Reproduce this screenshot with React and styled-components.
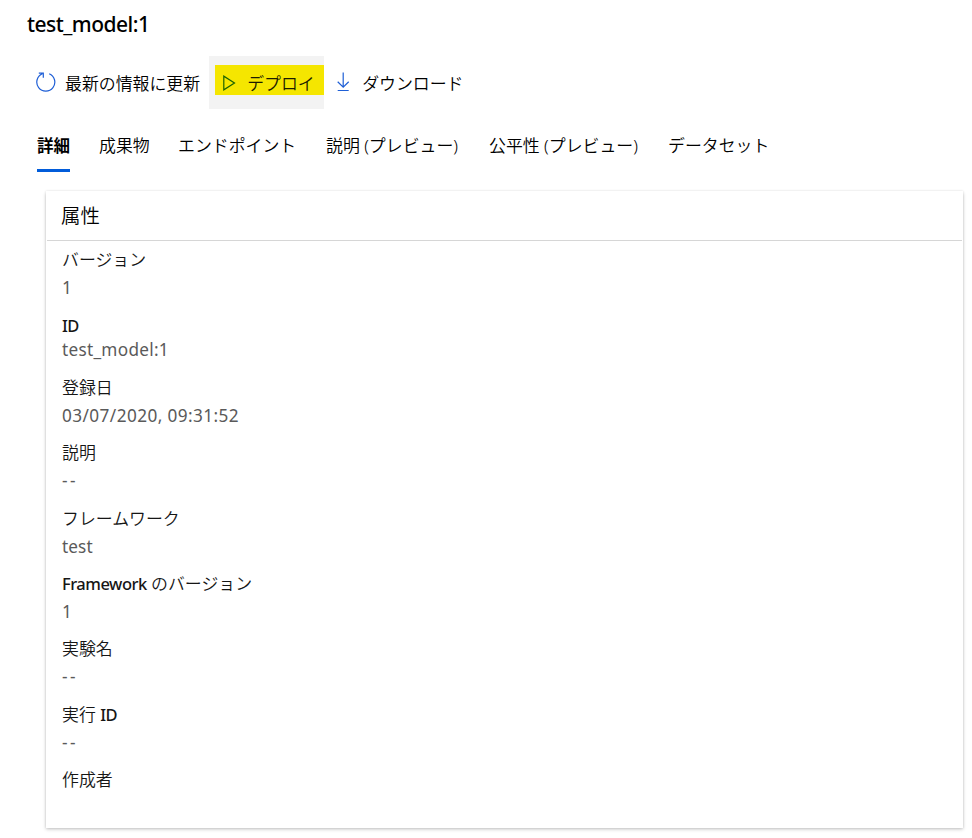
import React from "react";
import styled, { createGlobalStyle } from "styled-components";

const GlobalStyle = createGlobalStyle`
  * { box-sizing: border-box; }
  html, body { margin: 0; background: #fff; }
  body {
    font-family: "Noto Sans", "Noto Sans CJK JP", sans-serif;
    font-size: 16.9px;
    color: #000;
    overflow: hidden;
  }
`;

const Page = styled.main`
  width: 972px;
  height: 838px;
  display: flex;
  flex-direction: column;
  background: #fff;
`;

const Title = styled.h1`
  margin: 0;
  height: 56px;
  padding: 9px 0 0 27px;
  font-size: 21px;
  line-height: 30px;
  font-weight: 500;
  letter-spacing: -0.52px;
`;

const Toolbar = styled.div`
  display: flex;
  height: 53px;
  padding-left: 36px;
`;

const Command = styled.button`
  display: flex;
  align-items: center;
  gap: ${(p) => p.$gap}px;
  height: 53px;
  padding: 0 0 1px;
  border: 0;
  background: transparent;
  font: inherit;
  color: inherit;
  white-space: nowrap;
  font-weight: 350;
`;

const HoverCommand = styled(Command)`
  width: 115px;
  margin: 0 12px 0 9px;
  padding: 0 0 6px 6px;
  background: #f3f3f3;
`;

const Highlight = styled.span`
  display: flex;
  align-items: center;
  gap: 11px;
  width: 109px;
  height: 30px;
  padding: 6px 0 0 7px;
  background: #f5e600;
  color: #1c1c00;
`;

const Icon = styled.svg`
  display: block;
  flex: none;
  fill: none;
  stroke: ${(p) => p.$color || "#1f5fd6"};
  stroke-width: 1.2;
`;

const Tabs = styled.nav`
  display: flex;
  height: 63px;
  padding: 20px 0 0 37px;
`;

const Tab = styled.a`
  height: 43px;
  width: ${(p) => p.$width}px;
  margin-right: ${(p) => p.$after}px;
  line-height: 33px;
  white-space: nowrap;
  font-size: ${(p) => (p.$active ? 16.5 : 16.9)}px;
  font-weight: ${(p) => (p.$active ? 700 : 350)};
  border-bottom: 3px solid ${(p) => (p.$active ? "#015cda" : "transparent")};
`;

const Card = styled.section`
  width: 917px;
  height: 637px;
  margin: 19px 0 0 46px;
  padding: 0 1px;
  background: #fff;
  box-shadow: 0 1.6px 3.6px rgba(0, 0, 0, 0.2), 0 0 2.5px rgba(0, 0, 0, 0.12);
`;

const CardTitle = styled.h2`
  height: 50px;
  margin: 0;
  padding-left: 14px;
  font-size: 19.4px;
  font-weight: 350;
  line-height: 49px;
  border-bottom: 1px solid #d6d6d6;
`;

const Properties = styled.dl`
  margin: 0;
  padding: 5px 15px 0;
`;

const Property = styled.div`
  height: ${(p) => (p.$compact ? 62.4 : 65.4)}px;
`;

const Label = styled.dt`
  height: ${(p) => (p.$compact ? 25 : 28)}px;
  line-height: ${(p) => (p.$compact ? 29 : 28)}px;
  font-weight: 350;
  color: #161616;
  white-space: nowrap;
`;

const Latin = styled.span`
  font-weight: 500;
  font-size: 16.5px;
  letter-spacing: -0.5px;
`;

const Value = styled.dd`
  margin: 0;
  height: 28px;
  line-height: ${(p) => (p.$compact ? 28 : 27)}px;
  font-size: 17.2px;
  font-weight: 400;
  color: #5a5a5a;
  letter-spacing: ${(p) => p.$spacing ?? 0}px;
`;

const RefreshIcon = () => (
  <Icon width="20" height="20" viewBox="0 0 20 20">
    <path d="M13.2 1.8A9 9 0 1 1 6.4 1.8M2.8 1.1H7.3V5.7" />
  </Icon>
);

const PlayIcon = () => (
  <Icon width="14" height="16" viewBox="0 0 14 16" $color="#1b6300">
    <path d="M1.8 1.2V14.8L12.5 8Z" />
  </Icon>
);

const DownloadIcon = () => (
  <Icon width="14" height="20" viewBox="0 0 14 20">
    <path d="M7.2 .5V15M1.7 9.8L7.2 15.2L12.7 9.8M1.7 18.5H12.7" />
  </Icon>
);

const tabs = [
  { name: "詳細", width: 33, after: 29, active: true },
  { name: "成果物", width: 50, after: 29 },
  { name: "エンドポイント", width: 119, after: 29 },
  { name: "説明 (プレビュー)", width: 133, after: 30 },
  { name: "公平性 (プレビュー)", width: 149, after: 30 },
  { name: "データセット", width: 102, after: 0 },
];

const properties = [
  { label: "バージョン", value: "1" },
  { label: <Latin>ID</Latin>, value: "test_model:1", compact: true, spacing: 0.28 },
  { label: "登録日", value: "03/07/2020, 09:31:52", spacing: 0.42 },
  { label: "説明", value: "--", spacing: 2.4 },
  { label: "フレームワーク", value: "test", spacing: 0.1 },
  { label: <><Latin>Framework</Latin> のバージョン</>, value: "1" },
  { label: "実験名", value: "--", spacing: 2.4 },
  { label: <>実行 <Latin>ID</Latin></>, value: "--", spacing: 2.4 },
  { label: "作成者", value: "" },
];

export default function App() {
  return (
    <Page>
      <GlobalStyle />
      <Title>test_model:1</Title>
      <Toolbar>
        <Command $gap={9}><RefreshIcon />最新の情報に更新</Command>
        <HoverCommand>
          <Highlight><PlayIcon />デプロイ</Highlight>
        </HoverCommand>
        <Command $gap={12}><DownloadIcon />ダウンロード</Command>
      </Toolbar>
      <Tabs>
        {tabs.map((t) => (
          <Tab key={t.name} $width={t.width} $after={t.after} $active={t.active}>{t.name}</Tab>
        ))}
      </Tabs>
      <Card>
        <CardTitle>属性</CardTitle>
        <Properties>
          {properties.map((p, i) => (
            <Property key={i} $compact={p.compact}>
              <Label $compact={p.compact}>{p.label}</Label>
              <Value $compact={p.compact} $spacing={p.spacing}>{p.value}</Value>
            </Property>
          ))}
        </Properties>
      </Card>
    </Page>
  );
}
